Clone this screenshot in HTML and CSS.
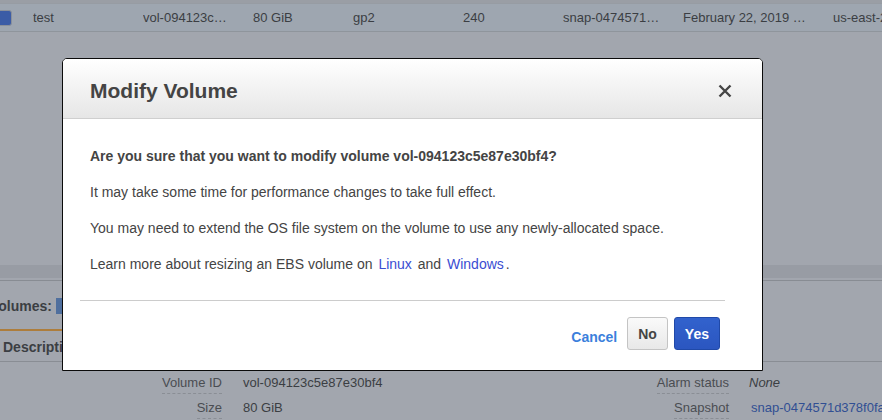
FILE: index.html
```html
<!DOCTYPE html>
<html lang="en">
<head>
<meta charset="utf-8">
<title>Modify Volume</title>
<link rel="stylesheet" href="styles.css">
</head>
<body>
<div class="page">
  <div class="top-strip"></div>
  <div class="table-row">
    <div class="cell"><span class="checkbox"></span></div>
    <div class="cell">test</div>
    <div class="cell">vol-094123c…</div>
    <div class="cell">80 GiB</div>
    <div class="cell">gp2</div>
    <div class="cell">240</div>
    <div class="cell">snap-0474571…</div>
    <div class="cell">February 22, 2019 …</div>
    <div class="cell">us-east-2a</div>
  </div>
  <div class="table-empty"></div>
  <div class="splitter"></div>
  <div class="volumes-bar">
    <span class="volumes-label">Volumes:</span>
    <span class="volumes-tag">vol-094123c5e87e30bf4</span>
  </div>
  <div class="tabs">
    <div class="tab active">Description</div>
  </div>
  <div class="details">
    <div class="d-label"><span class="term">Volume ID</span></div>
    <div class="d-value">vol-094123c5e87e30bf4</div>
    <div class="d-label"><span class="term">Alarm status</span></div>
    <div class="d-value"><em>None</em></div>
    <div class="d-label"><span class="term">Size</span></div>
    <div class="d-value">80 GiB</div>
    <div class="d-label"><span class="term">Snapshot</span></div>
    <div class="d-value"><span class="dim-link">snap-0474571d378f0fa2b</span></div>
  </div>
</div>

<div class="modal" role="dialog" aria-label="Modify Volume">
  <div class="modal-header">
    <h1 class="modal-title">Modify Volume</h1>
    <span class="modal-close" aria-label="Close">
      <svg width="14" height="14" viewBox="0 0 14 14"><path d="M1.5 1.5 L12.5 12.5 M12.5 1.5 L1.5 12.5" stroke="#454545" stroke-width="2.4" fill="none"/></svg>
    </span>
  </div>
  <div class="modal-body">
    <p class="strong">Are you sure that you want to modify volume vol-094123c5e87e30bf4?</p>
    <p>It may take some time for performance changes to take full effect.</p>
    <p>You may need to extend the OS file system on the volume to use any newly-allocated space.</p>
    <p>Learn more about resizing an EBS volume on <a class="link" href="#">Linux</a> and <a class="link" href="#">Windows</a>.</p>
  </div>
  <div class="modal-divider"></div>
  <div class="modal-footer">
    <a class="cancel" href="#">Cancel</a>
    <button class="btn btn-no">No</button>
    <button class="btn btn-yes">Yes</button>
  </div>
</div>
</body>
</html>
```

FILE: styles.css
```css
html, body {
  margin: 0;
  padding: 0;
}
body {
  width: 882px;
  height: 420px;
  overflow: hidden;
  background: #a2a6ae;
  font-family: "Liberation Sans", Arial, sans-serif;
  position: relative;
}
.page {
  display: flex;
  flex-direction: column;
  color: #3b3e43;
}
.top-strip {
  height: 3px;
  background: #9a9ea5;
}
.table-row {
  display: grid;
  grid-template-columns: 33px 110px 110px 100px 110px 100px 120px 150px 100px;
  height: 27px;
  align-items: center;
  background: #9ea6b0;
  border-top: 1px solid #979ca3;
  border-bottom: 1px solid #8f959c;
  font-size: 13px;
  white-space: nowrap;
}
.cell {
  overflow: hidden;
}
.checkbox {
  display: block;
  box-sizing: border-box;
  width: 16px;
  height: 16px;
  margin-left: -4px;
  border: 1px solid #8a909a;
  border-radius: 3px;
  background: #3b5ca6;
}
.table-empty {
  height: 233px;
}
.splitter {
  height: 13px;
  background: #989ca4;
  border-bottom: 2px solid #a2a6ae;
  box-shadow: 0 1px 0 #888c93;
  margin-bottom: 1px;
}
.volumes-bar {
  height: 48px;
  display: flex;
  align-items: center;
  gap: 4px;
  font-size: 14px;
  font-weight: bold;
  padding-top: 1px;
  box-sizing: border-box;
}
.volumes-label {
  margin-left: -10px;
}
.volumes-tag {
  background: #4f6f9e;
  color: #dfe4ec;
  font-weight: normal;
  font-size: 12px;
  line-height: 16px;
  padding: 0 4px 0 10px;
}
.tabs {
  display: flex;
  border-bottom: 1px solid #898d94;
  height: 33px;
  box-sizing: border-box;
}
.tab {
  font-size: 14px;
  font-weight: bold;
  padding: 8px 12px 0 3px;
  border-top: 2px solid #ad7d3c;
  box-sizing: border-box;
  width: 130px;
}
.details {
  display: grid;
  grid-template-columns: 222px 386px 121px auto;
  grid-auto-rows: 25px;
  padding-top: 8px;
  font-size: 13px;
  align-items: center;
}
.d-label {
  text-align: right;
  color: #4a4d52;
  white-space: nowrap;
}
.term {
  border-bottom: 1px dashed #8a8e95;
  padding-bottom: 3px;
}
.d-value {
  padding-left: 21px;
  white-space: nowrap;
  color: #3b3e43;
}
.details .d-value:nth-child(4n) {
  padding-left: 20px;
}
.dim-link {
  color: #314f93;
  margin-left: 2px;
}

/* Modal */
.modal {
  position: absolute;
  left: 62px;
  top: 58px;
  width: 701px;
  box-sizing: border-box;
  background: #fff;
  border: 1px solid #0b0b0b;
  border-radius: 5px 5px 0 0;
  color: #444;
}
.modal-header {
  height: 60px;
  box-sizing: border-box;
  padding: 5px 30px 0 27px;
  display: flex;
  align-items: center;
  justify-content: space-between;
  background: linear-gradient(#ffffff, #e6e6e6);
  border-bottom: 1px solid #cfcfcf;
  border-radius: 4px 4px 0 0;
}
.modal-title {
  margin: 0;
  font-size: 21px;
  font-weight: bold;
  color: #444;
  line-height: 24px;
}
.modal-close {
  display: flex;
  width: 14px;
  height: 14px;
}
.modal-body {
  padding: 27px 30px 0 27px;
  font-size: 14px;
  line-height: 20px;
}
.modal-body p {
  margin: 0 0 16px;
}
.modal-body p:last-child {
  margin-bottom: 0;
}
.modal-body .strong {
  font-weight: bold;
}
.link {
  color: #3a4dd2;
  text-decoration: none;
  margin: 0 2px;
}
.modal-divider {
  height: 1px;
  background: #cccccc;
  margin: 26px 37px 0 17px;
}
.modal-footer {
  display: flex;
  justify-content: flex-end;
  align-items: center;
  padding: 16px 42px 20px 0;
}
.cancel {
  color: #3b7fdc;
  font-size: 14px;
  font-weight: bold;
  text-decoration: none;
  margin-right: 10px;
  padding-top: 7px;
}
.btn {
  height: 33px;
  box-sizing: border-box;
  padding: 0 10px;
  font-family: "Liberation Sans", Arial, sans-serif;
  font-size: 14px;
  font-weight: bold;
  border-radius: 3px;
  cursor: pointer;
}
.btn-no {
  background: linear-gradient(#fafafa, #e8e8e8);
  border: 1px solid #c4c4c4;
  color: #444;
}
.btn-yes {
  margin-left: 6px;
  background: linear-gradient(#3262cd, #2b56c0);
  border: 1px solid #2049a8;
  color: #fff;
}
```
